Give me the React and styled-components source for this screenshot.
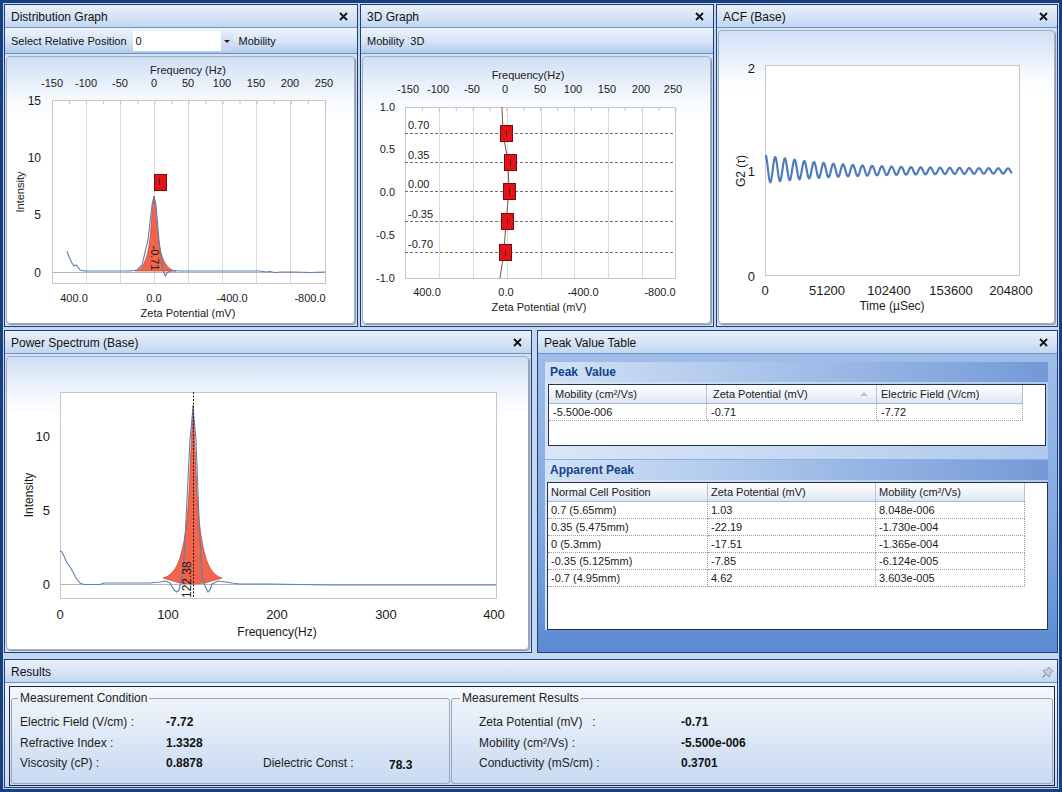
import React from 'react'
import styled, { createGlobalStyle } from 'styled-components'

const GlobalStyle = createGlobalStyle`
  html, body { margin: 0; padding: 0; }
  body { font-family: "Liberation Sans", Arial, sans-serif; background: #173f82; }
  * { box-sizing: border-box; }
`

const Frame = styled.div`
  width: 1062px;
  height: 792px;
  border: 3px solid #173f82;
  background: #c3d7f1;
  padding: 1px;
  display: flex;
  flex-direction: column;
  overflow: hidden;
`

const Row = styled.div`
  display: flex;
  flex: none;
  gap: ${p => p.$gap}px;
  height: ${p => p.$h}px;
  margin-top: ${p => p.$mt || 0}px;
`

const Panel = styled.section`
  display: flex;
  flex-direction: column;
  width: ${p => (p.$w ? p.$w + 'px' : 'auto')};
  flex: ${p => (p.$w ? 'none' : '1')};
  height: 100%;
  border: 1px solid #1f3e74;
  background: #d3e2f5;
  overflow: hidden;
`

const TitleBar = styled.div`
  height: 23px;
  flex: none;
  display: flex;
  align-items: center;
  justify-content: space-between;
  padding: 1px ${p => (p.$pin ? 3 : 9)}px 0 6px;
  background: linear-gradient(#e8f0fb, #d5e3f6 55%, #c2d6f1);
  border-bottom: 1px solid #6f92c8;
  font-size: 12px;
  color: #111;
`

const ToolBar = styled.div`
  height: 26px;
  flex: none;
  display: flex;
  align-items: center;
  gap: 6px;
  padding: 1px 6px 0;
  background: linear-gradient(#edf3fc, #d6e4f6 55%, #b1caec);
  border-bottom: 1px solid #6a8fc7;
  font-size: 11px;
  color: #111;
`

const Combo = styled.div`
  width: 100px;
  height: 20px;
  display: flex;
  align-items: center;
  justify-content: space-between;
  background: #fff;
  padding-left: 3px;
  font-size: 11px;
`

const ComboButton = styled.div`
  width: 12px;
  height: 20px;
  display: flex;
  align-items: center;
  justify-content: center;
  background: linear-gradient(#e3ecf8, #c3d4ec);
  &::after {
    content: '';
    border-left: 3px solid transparent;
    border-right: 3px solid transparent;
    border-top: 3px solid #222;
  }
`

const ChartBox = styled.div`
  flex: 1;
  min-height: 0;
  margin: 2px 2px 2px 1px;
  border: 1px solid #a3adbd;
  border-radius: 4px;
  background: linear-gradient(#cfdff5, #f4f8fd 40px, #fff 60px);
  box-shadow: 1px 1px 1px rgba(0, 0, 0, 0.35);
  overflow: hidden;
`

const Svg = styled.svg`
  display: block;
  width: 100%;
  height: 100%;
  font-family: "Liberation Sans", Arial, sans-serif;
  text {
    fill: #1a1a1a;
  }
`

const CloseIcon = () => (
  <svg width="9" height="9" viewBox="0 0 9 9">
    <path d="M1 1L8 8M8 1L1 8" stroke="#111" strokeWidth="1.8" />
  </svg>
)

const PinIcon = () => (
  <svg width="12" height="12" viewBox="0 0 12 12">
    <path
      d="M6.5 1 L11 5.5 L9.6 6.2 L7.6 8.2 L8 10.3 L7 11 L1 5 L1.7 4 L3.8 4.4 L5.8 2.4 Z"
      fill="#c4ccd8"
      stroke="#7d8796"
      strokeWidth="0.8"
    />
    <path d="M3.6 8.4 L0.6 11.4" stroke="#7d8796" strokeWidth="1.2" />
  </svg>
)

const Title = ({ children, pin }) => (
  <TitleBar $pin={pin}>
    <span>{children}</span>
    {pin ? <PinIcon /> : <CloseIcon />}
  </TitleBar>
)

const toPath = pts => pts.map((p, i) => (i ? 'L' : 'M') + p[0] + ',' + p[1]).join(' ')

/* ---------- Distribution graph ---------- */
const distLine = [
  [67, 251], [68, 254], [70, 259], [72, 263], [74, 266], [76, 265], [78, 267], [80, 270], [84, 271],
  [130, 271], [137, 270], [142, 265], [148, 240], [152, 205], [154, 196], [156, 205], [159, 240],
  [162, 265], [164, 273], [165.5, 276], [167, 273], [170, 271], [175, 270.5], [180, 271], [260, 271],
  [266, 272], [270, 271.5], [275, 272.5], [282, 272], [295, 272], [310, 272.5], [325, 272],
]
const distTop = [[-150, 52], [-100, 86], [-50, 120], [0, 154], [50, 188], [100, 222], [150, 256], [200, 290], [250, 324]]

function DistChart() {
  const grid = [86.5, 120.5, 154.5, 188.5, 222.5, 256.5, 290.5]
  const ticks = []
  for (let x = 52.5; x <= 326; x += 17.05) ticks.push(x)
  return (
    <Svg viewBox="7 57 347 266" preserveAspectRatio="xMinYMin meet">
      <rect x="52.5" y="100.5" width="273" height="183" fill="#fff" stroke="#c6c6c6" />
      {grid.map(x => (
        <line key={x} x1={x} x2={x} y1="101" y2="283" stroke="#dadada" />
      ))}
      {ticks.map(x => (
        <line key={x} x1={x} x2={x} y1="101" y2="104" stroke="#c0c0c0" />
      ))}
      <line x1="52" x2="325" y1="272.5" y2="272.5" stroke="#b5b5b5" />
      <path d="M135,271 C146,269 150,252 152,212 L154,196 L156,212 C158,252 163,269 176,271 Z" fill="#f2654c" stroke="#c9402c" strokeWidth="0.7" />
      <path d={toPath(distLine)} fill="none" stroke="#5a7fb5" strokeWidth="1.1" />
      <rect x="154.5" y="174.5" width="12" height="16" fill="#e1141c" stroke="#7a0a0a" />
      <line x1="159.5" x2="159.5" y1="179" y2="185" stroke="#5a0000" strokeWidth="0.8" />
      <text transform="translate(151,258) rotate(90)" fontSize="11" textAnchor="middle">-0.71</text>
      {[['15', 105], ['10', 162], ['5', 219], ['0', 277]].map(([t, y]) => (
        <text key={t} x="41" y={y} fontSize="12" textAnchor="end">{t}</text>
      ))}
      {distTop.map(([t, x]) => (
        <text key={t} x={x} y="87" fontSize="11" textAnchor="middle">{t}</text>
      ))}
      <text x="188" y="74" fontSize="11" textAnchor="middle">Frequency (Hz)</text>
      {[['400.0', 74], ['0.0', 154], ['-400.0', 232], ['-800.0', 310]].map(([t, x]) => (
        <text key={t} x={x} y="302" fontSize="11" textAnchor="middle">{t}</text>
      ))}
      <text x="188" y="317" fontSize="11" textAnchor="middle">Zeta Potential (mV)</text>
      <text transform="translate(24,192) rotate(-90)" fontSize="11" textAnchor="middle">Intensity</text>
    </Svg>
  )
}

/* ---------- 3D graph ---------- */
const levels = [
  ['0.70', 133, 129, 500],
  ['0.35', 162, 159, 504],
  ['0.00', 191, 188, 503],
  ['-0.35', 221, 218, 501],
  ['-0.70', 252, 248, 499],
]
const d3Top = [[-150, 408], [-100, 438], [-50, 472], [0, 505], [50, 540], [100, 573], [150, 607], [200, 641], [250, 673]]

function Chart3D() {
  const grid = [439.5, 473.5, 507.5, 541.5, 574.5, 608.5, 642.5]
  const ticks = []
  for (let x = 405.5; x <= 676; x += 16.9) ticks.push(x)
  return (
    <Svg viewBox="363 57 347 266" preserveAspectRatio="xMinYMin meet">
      <rect x="405.5" y="107.5" width="270" height="171" fill="#fff" stroke="#c6c6c6" />
      {grid.map(x => (
        <line key={x} x1={x} x2={x} y1="108" y2="278" stroke="#dadada" />
      ))}
      {ticks.map(x => (
        <line key={x} x1={x} x2={x} y1="108" y2="111" stroke="#c0c0c0" />
      ))}
      {levels.map(([t, y, ty]) => (
        <g key={t}>
          <line x1="405" x2="675" y1={y + 0.5} y2={y + 0.5} stroke="#6f6f6f" strokeDasharray="3 2" />
          <text x="408" y={ty} fontSize="11">{t}</text>
        </g>
      ))}
      <path d="M502,107 L503,133 L508,162 L509,191 L506,221 L504,252 L500,278" fill="none" stroke="#8d4a3c" strokeWidth="1" />
      {levels.map(([t, y, , x]) => (
        <g key={t}>
          <rect x={x + 0.5} y={y - 7.5} width="12" height="16" fill="#e1141c" stroke="#7a0a0a" />
          <line x1={x + 6.5} x2={x + 6.5} y1={y - 3} y2={y + 4} stroke="#5a0000" strokeWidth="0.8" />
        </g>
      ))}
      {[['1.0', 111], ['0.5', 153], ['0.0', 196], ['-0.5', 239], ['-1.0', 282]].map(([t, y]) => (
        <text key={t} x="395" y={y} fontSize="11" textAnchor="end">{t}</text>
      ))}
      {d3Top.map(([t, x]) => (
        <text key={t} x={x} y="93" fontSize="11" textAnchor="middle">{t}</text>
      ))}
      <text x="528" y="79" fontSize="11" textAnchor="middle">Frequency(Hz)</text>
      {[['400.0', 427], ['0.0', 506], ['-400.0', 583], ['-800.0', 660]].map(([t, x]) => (
        <text key={t} x={x} y="296" fontSize="11" textAnchor="middle">{t}</text>
      ))}
      <text x="539" y="311" fontSize="11" textAnchor="middle">Zeta Potential (mV)</text>
    </Svg>
  )
}

/* ---------- ACF ---------- */
const acfPath = (() => {
  const pts = []
  for (let x = 765.5; x <= 1012; x += 0.5) {
    const t = x - 765.5
    const a = 2.3 + 11.5 * Math.exp(-t / 70)
    const c = 169 + 2 * (1 - Math.exp(-t / 60))
    pts.push([x, +(c - a * Math.cos((2 * Math.PI * t) / 9.7)).toFixed(2)])
  }
  return toPath(pts)
})()

function AcfChart() {
  return (
    <Svg viewBox="719 31 335 292" preserveAspectRatio="xMinYMin meet">
      <rect x="765.5" y="65.5" width="254" height="210" fill="#fff" stroke="#c6c6c6" />
      <path d={acfPath} fill="none" stroke="#4f7cbd" strokeWidth="2.2" />
      {[['2', 73], ['1', 176], ['0', 281]].map(([t, y]) => (
        <text key={t} x="755" y={y} fontSize="13" textAnchor="end">{t}</text>
      ))}
      {[['0', 765], ['51200', 827], ['102400', 889], ['153600', 951], ['204800', 1011]].map(([t, x]) => (
        <text key={t} x={x} y="295" fontSize="13" textAnchor="middle">{t}</text>
      ))}
      <text x="892" y="310" fontSize="12" textAnchor="middle">Time (µSec)</text>
      <text transform="translate(745,171) rotate(-90)" fontSize="12" textAnchor="middle">G2 (τ)</text>
    </Svg>
  )
}

/* ---------- Power spectrum ---------- */
const powerLine = [
  [60, 551], [62, 552], [64, 556], [67, 563], [70, 567], [73, 572], [76, 578], [80, 583], [84, 584.5],
  [100, 584.5], [104, 583], [150, 583], [160, 582], [166, 581], [170, 583], [174, 590], [177, 592],
  [179, 590], [181, 582], [184, 560], [187, 500], [190, 440], [193, 408], [196, 440], [199, 520],
  [202, 575], [205, 586], [208, 592], [210, 590], [212, 584], [218, 581], [226, 582], [232, 583],
  [240, 584], [270, 584], [330, 585], [496, 585],
]

function PowerChart() {
  return (
    <Svg viewBox="7 357 521 292" preserveAspectRatio="xMinYMin meet">
      <rect x="60.5" y="392.5" width="436" height="206" fill="#fff" stroke="#c6c6c6" />
      <line x1="60" x2="496" y1="584.5" y2="584.5" stroke="#b5b5b5" />
      <path d="M163,578 C178,574 187,555 190,470 L193,405 L196,470 C199,555 208,574 222,578 L205,583 L193,584 L180,583 Z" fill="#f2654c" stroke="#c9402c" strokeWidth="0.7" />
      <path d={toPath(powerLine)} fill="none" stroke="#5a7fb5" strokeWidth="1.1" />
      <line x1="193.5" x2="193.5" y1="392" y2="598" stroke="#1d1d1d" strokeDasharray="2 1.5" />
      <text transform="translate(191,598) rotate(-90)" fontSize="12">122.38</text>
      {[['10', 441], ['5', 515], ['0', 589]].map(([t, y]) => (
        <text key={t} x="50" y={y} fontSize="13" textAnchor="end">{t}</text>
      ))}
      {[['0', 60], ['100', 168], ['200', 277], ['300', 386], ['400', 494]].map(([t, x]) => (
        <text key={t} x={x} y="619" fontSize="13" textAnchor="middle">{t}</text>
      ))}
      <text x="277" y="636" fontSize="12" textAnchor="middle">Frequency(Hz)</text>
      <text transform="translate(33,495) rotate(-90)" fontSize="12" textAnchor="middle">Intensity</text>
    </Svg>
  )
}

/* ---------- Peak value table ---------- */
const PeakBody = styled.div`
  flex: 1;
  display: flex;
  flex-direction: column;
  padding: 8px 9px 22px 7px;
  background: linear-gradient(#9fbde8, #7fa7e0 60%, #5b8ad2);
`

const Section = styled.div`
  display: flex;
  flex-direction: column;
  flex: ${p => (p.$grow ? '1' : 'none')};
  margin-top: ${p => p.$mt || 0}px;
  padding-bottom: ${p => p.$pb || 0}px;
  background: linear-gradient(to right, #dae6f7, #c2d5f1 60%, #aec8ee);
`

const SectionHead = styled.div`
  height: 20px;
  display: flex;
  align-items: center;
  padding-left: 5px;
  background: linear-gradient(to right, #d3e2f6, #a8c3ea 45%, #7399d6);
  font-size: 12px;
  font-weight: bold;
  color: #15428b;
  white-space: pre;
`

const TableBox = styled.div`
  margin: 2px ${p => p.$mr}px 0 ${p => p.$ml}px;
  height: ${p => (p.$h ? p.$h + 'px' : 'auto')};
  flex: ${p => (p.$h ? 'none' : '1')};
  background: #fff;
  border: 1px solid #26324a;
`

const TableGrid = styled.div`
  display: grid;
  grid-template-columns: ${p => p.$cols};
  width: fit-content;
  font-size: 11px;
  color: #1a1a1a;
`

const HeadCell = styled.div`
  height: ${p => p.$h}px;
  display: flex;
  align-items: center;
  justify-content: space-between;
  padding: 0 8px 0 ${p => p.$pl}px;
  background: linear-gradient(#fefefe, #eef3fa 55%, #dbe5f3);
  border-right: 1px solid #b5c3d8;
  border-bottom: 1px solid #a9b9d0;
  white-space: nowrap;
`

const SortArrow = styled.span`
  border-left: 4px solid transparent;
  border-right: 4px solid transparent;
  border-bottom: 4px solid #b9c2cf;
`

const Cell = styled.div`
  height: 17px;
  line-height: 16px;
  padding-left: ${p => p.$pl}px;
  border-right: 1px dotted #9c9c9c;
  border-bottom: 1px dotted #9c9c9c;
  white-space: nowrap;
`

const apparent = [
  ['0.7 (5.65mm)', '1.03', '8.048e-006'],
  ['0.35 (5.475mm)', '-22.19', '-1.730e-004'],
  ['0 (5.3mm)', '-17.51', '-1.365e-004'],
  ['-0.35 (5.125mm)', '-7.85', '-6.124e-005'],
  ['-0.7 (4.95mm)', '4.62', '3.603e-005'],
]

function PeakTable() {
  return (
    <PeakBody>
      <Section $pb={13}>
        <SectionHead>{'Peak  Value'}</SectionHead>
        <TableBox $ml={3} $mr={2} $h={62}>
          <TableGrid $cols="158px 170px 146px">
            <HeadCell $h={19} $pl={6}>Mobility (cm²/Vs)</HeadCell>
            <HeadCell $h={19} $pl={6}>
              Zeta Potential (mV)
              <SortArrow />
            </HeadCell>
            <HeadCell $h={19} $pl={4}>Electric Field (V/cm)</HeadCell>
            <Cell $pl={4}>-5.500e-006</Cell>
            <Cell $pl={4}>-0.71</Cell>
            <Cell $pl={4}>-7.72</Cell>
          </TableGrid>
        </TableBox>
      </Section>
      <Section $grow $mt={1}>
        <SectionHead>Apparent Peak</SectionHead>
        <TableBox $ml={2} $mr={0}>
          <TableGrid $cols="160px 168px 149px">
            <HeadCell $h={19} $pl={3}>Normal Cell Position</HeadCell>
            <HeadCell $h={19} $pl={3}>Zeta Potential (mV)</HeadCell>
            <HeadCell $h={19} $pl={3}>Mobility (cm²/Vs)</HeadCell>
            {apparent.map(row =>
              row.map((v, i) => (
                <Cell key={row[0] + i} $pl={3}>{v}</Cell>
              ))
            )}
          </TableGrid>
        </TableBox>
      </Section>
    </PeakBody>
  )
}

/* ---------- Results ---------- */
const ResultsBody = styled.div`
  flex: 1;
  padding: 3px 2px 1px 4px;
  background: linear-gradient(#eef4fc, #cbdbf1);
`

const DarkBox = styled.div`
  height: 100%;
  display: flex;
  gap: 1px;
  padding: 4px 1px 1px 1px;
  border: 1px solid #1b2440;
  background: linear-gradient(#f5f8fd, #d9e5f5 60%, #c8d9f1);
`

const Group = styled.fieldset`
  margin: 0;
  width: ${p => (p.$w ? p.$w + 'px' : 'auto')};
  flex: ${p => (p.$w ? 'none' : '1')};
  border: 1px solid #98a7bd;
  border-radius: 3px;
  padding: 7px 0 0 ${p => p.$pl}px;
  min-width: 0;
  legend {
    font-size: 12px;
    color: #222;
    padding: 0 2px;
    margin-left: ${p => p.$lm}px;
  }
`

const Fields = styled.div`
  display: grid;
  grid-template-columns: ${p => p.$cols};
  grid-auto-rows: 20.5px;
  align-items: center;
  font-size: 12px;
  color: #1e1e1e;
`

const Label = styled.span`
  white-space: pre;
`

const Value = styled.span`
  font-weight: bold;
  color: #111;
  padding-top: ${p => (p.$low ? 3 : 0)}px;
`

function Results() {
  return (
    <ResultsBody>
      <DarkBox>
        <Group $w={439} $pl={8} $lm={-2}>
          <legend>Measurement Condition</legend>
          <Fields $cols="146px 97px 126px auto">
            <Label>Electric Field (V/cm) :</Label>
            <Value>-7.72</Value>
            <span />
            <span />
            <Label>Refractive Index :</Label>
            <Value>1.3328</Value>
            <span />
            <span />
            <Label>Viscosity (cP) :</Label>
            <Value>0.8878</Value>
            <Label>Dielectric Const :</Label>
            <Value $low>78.3</Value>
          </Fields>
        </Group>
        <Group $pl={27} $lm={-19}>
          <legend>Measurement Results</legend>
          <Fields $cols="202px auto">
            <Label>{'Zeta Potential (mV)   :'}</Label>
            <Value>-0.71</Value>
            <Label>Mobility (cm²/Vs) :</Label>
            <Value>-5.500e-006</Value>
            <Label>Conductivity (mS/cm) :</Label>
            <Value>0.3701</Value>
          </Fields>
        </Group>
      </DarkBox>
    </ResultsBody>
  )
}

export default function App() {
  return (
    <>
      <GlobalStyle />
      <Frame>
        <Row $h={323} $gap={2}>
          <Panel $w={354}>
            <Title>Distribution Graph</Title>
            <ToolBar>
              <span>Select Relative Position</span>
              <Combo>
                0
                <ComboButton />
              </Combo>
              <span>Mobility</span>
            </ToolBar>
            <ChartBox>
              <DistChart />
            </ChartBox>
          </Panel>
          <Panel $w={354}>
            <Title>3D Graph</Title>
            <ToolBar>
              <span>Mobility</span>
              <span>3D</span>
            </ToolBar>
            <ChartBox>
              <Chart3D />
            </ChartBox>
          </Panel>
          <Panel>
            <Title>ACF (Base)</Title>
            <ChartBox>
              <AcfChart />
            </ChartBox>
          </Panel>
        </Row>
        <Row $h={323} $gap={5} $mt={3}>
          <Panel $w={528}>
            <Title>Power Spectrum (Base)</Title>
            <ChartBox>
              <PowerChart />
            </ChartBox>
          </Panel>
          <Panel>
            <Title>Peak Value Table</Title>
            <PeakTable />
          </Panel>
        </Row>
        <Row $h={129} $gap={0} $mt={6}>
          <Panel>
            <Title pin>Results</Title>
            <Results />
          </Panel>
        </Row>
      </Frame>
    </>
  )
}
